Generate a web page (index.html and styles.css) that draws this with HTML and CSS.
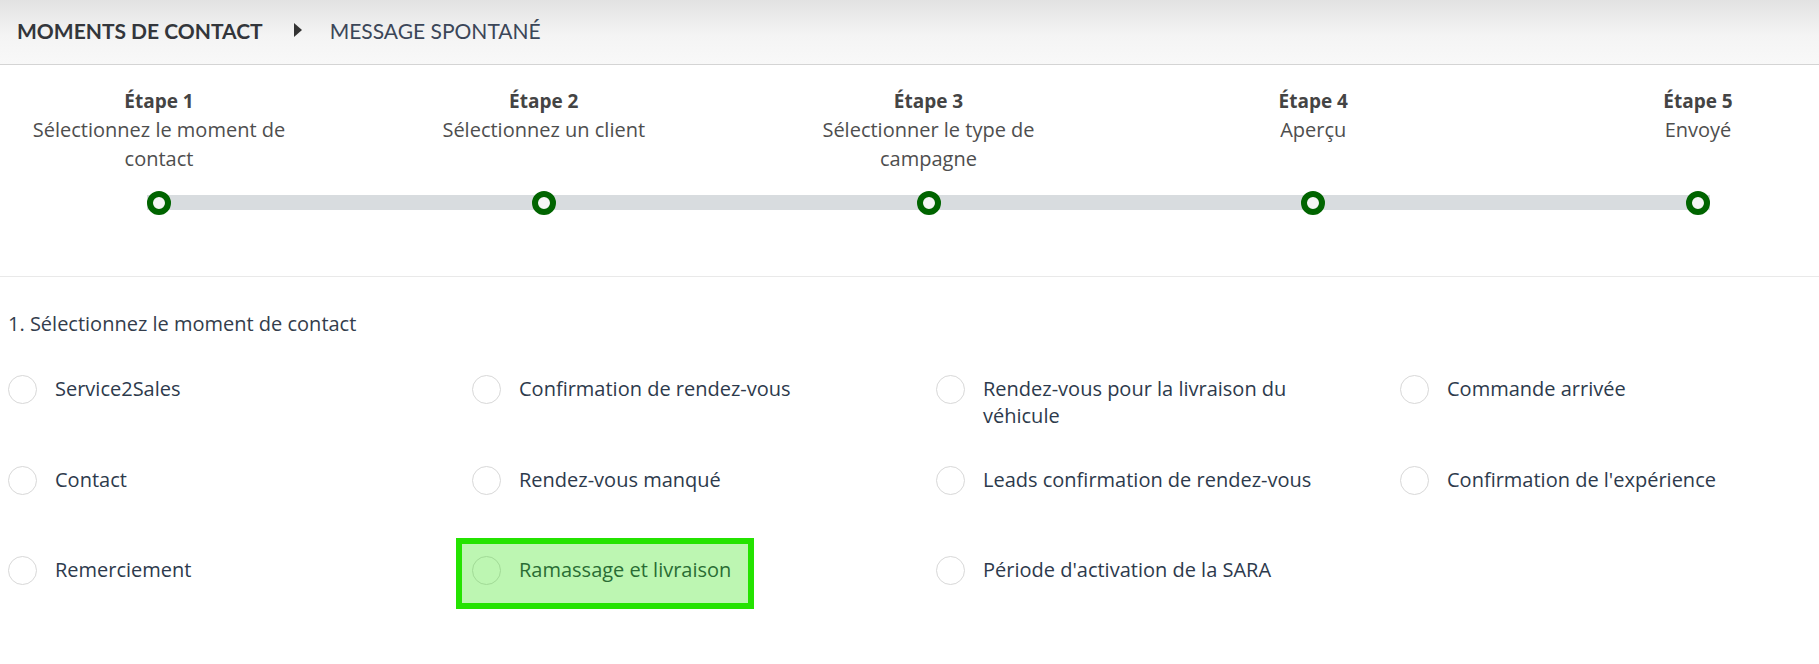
FILE: index.html
```html
<!DOCTYPE html>
<html lang="fr">
<head>
  <meta charset="UTF-8" />
  <meta name="viewport" content="width=device-width, initial-scale=1.0"/>
  <title>Moments de contact - Message spontané</title>
  <link rel="stylesheet" href="styles.css">
</head>
<body>
  <div class="topbar">
    <span class="crumb-main">MOMENTS DE CONTACT</span>
    <span class="crumb-arrow"></span>
    <span class="crumb-sub">MESSAGE SPONTANÉ</span>
  </div>

  <div class="stepper">
    <div class="step-labels">
      <div class="step">
        <div class="step-text"><strong>Étape 1</strong>Sélectionnez le moment de contact</div>
      </div>
      <div class="step">
        <div class="step-text"><strong>Étape 2</strong>Sélectionnez un client</div>
      </div>
      <div class="step">
        <div class="step-text"><strong>Étape 3</strong>Sélectionner le type de campagne</div>
      </div>
      <div class="step">
        <div class="step-text"><strong>Étape 4</strong>Aperçu</div>
      </div>
      <div class="step">
        <div class="step-text"><strong>Étape 5</strong>Envoyé</div>
      </div>
    </div>
    <div class="track">
      <span class="dot"></span>
      <span class="dot"></span>
      <span class="dot"></span>
      <span class="dot"></span>
      <span class="dot"></span>
    </div>
  </div>

  <div class="content">
    <p class="question">1. Sélectionnez le moment de contact</p>

    <div class="options">
      <label class="option"><span class="radio"></span><span class="option-text">Service2Sales</span></label>
      <label class="option"><span class="radio"></span><span class="option-text">Confirmation de rendez-vous</span></label>
      <label class="option"><span class="radio"></span><span class="option-text">Rendez-vous pour la livraison du véhicule</span></label>
      <label class="option"><span class="radio"></span><span class="option-text">Commande arrivée</span></label>

      <label class="option"><span class="radio"></span><span class="option-text">Contact</span></label>
      <label class="option"><span class="radio"></span><span class="option-text">Rendez-vous manqué</span></label>
      <label class="option"><span class="radio"></span><span class="option-text">Leads confirmation de rendez-vous</span></label>
      <label class="option"><span class="radio"></span><span class="option-text">Confirmation de l'expérience</span></label>

      <label class="option"><span class="radio"></span><span class="option-text">Remerciement</span></label>
      <label class="option"><span class="radio"></span><span class="option-text">Ramassage et livraison</span><span class="highlight"></span></label>
      <label class="option"><span class="radio"></span><span class="option-text">Période d'activation de la SARA</span></label>
    </div>
  </div>
</body>
</html>
```

FILE: styles.css
```css
body {
  margin: 0;
  font-family: "Open Sans", Arial, sans-serif;
  background: #fff;
  color: #333;
}

/* breadcrumb bar */
.topbar {
  height: 65px;
  display: flex;
  align-items: center;
  padding: 0 0 4px 17px;
  box-sizing: border-box;
  background: linear-gradient(#e2e2e2, #f4f4f4 55%, #f8f8f8);
  border-bottom: 1px solid #d4d4d4;
  font-family: Lato, "Open Sans", sans-serif;
  font-size: 21px;
}
.crumb-main {
  font-weight: 700;
  color: #33363b;
}
.crumb-arrow {
  width: 0;
  height: 0;
  margin: 0 28px 0 31px;
  border-left: 8px solid #333;
  border-top: 7px solid transparent;
  border-bottom: 7px solid transparent;
}
.crumb-sub {
  color: #3b4658;
}

/* stepper */
.stepper {
  padding: 22px 0 66px;
  border-bottom: 1px solid #e9e9e9;
}
.step-labels {
  display: flex;
  justify-content: space-between;
  padding: 0 121px 0 159px;
}
.step {
  width: 0;
  display: flex;
  flex-direction: column;
  align-items: center;
}
.step-text {
  width: 270px;
  flex-shrink: 0;
  height: 87px;
  text-align: center;
  font-size: 20px;
  line-height: 29px;
  color: #4e4e4e;
}
.step-text strong {
  display: block;
  font-size: 19px;
  line-height: 28px;
  color: #444;
}
.track {
  display: flex;
  justify-content: space-between;
  align-items: center;
  height: 15px;
  margin: 21px 109px 0 147px;
  background: #d8dcdf;
}
.dot {
  width: 24px;
  height: 24px;
  box-sizing: border-box;
  border: 6px solid #006400;
  border-radius: 50%;
  background: #f6f6f6;
}

/* contact moments */
.content {
  padding: 33px 8px 40px;
}
.question {
  margin: 0;
  font-size: 20px;
  line-height: 27px;
  color: #333d4c;
}
.options {
  display: grid;
  grid-template-columns: repeat(3, 464px) 1fr;
  grid-auto-rows: 90.5px;
  margin-top: 38px;
}
.option {
  position: relative;
  display: flex;
  align-items: flex-start;
  cursor: pointer;
}
.radio {
  width: 29px;
  height: 29px;
  flex-shrink: 0;
  box-sizing: border-box;
  border: 1px solid #d8d8d8;
  border-radius: 50%;
  background: #fff;
}
.option-text {
  max-width: 340px;
  margin-left: 18px;
  font-size: 20px;
  line-height: 27px;
  color: #2d3a4c;
}
.highlight {
  position: absolute;
  left: -16px;
  top: -18px;
  width: 298px;
  height: 71px;
  box-sizing: border-box;
  border: 6px solid #24e300;
  background: rgba(36, 226, 0, 0.3);
}
```
